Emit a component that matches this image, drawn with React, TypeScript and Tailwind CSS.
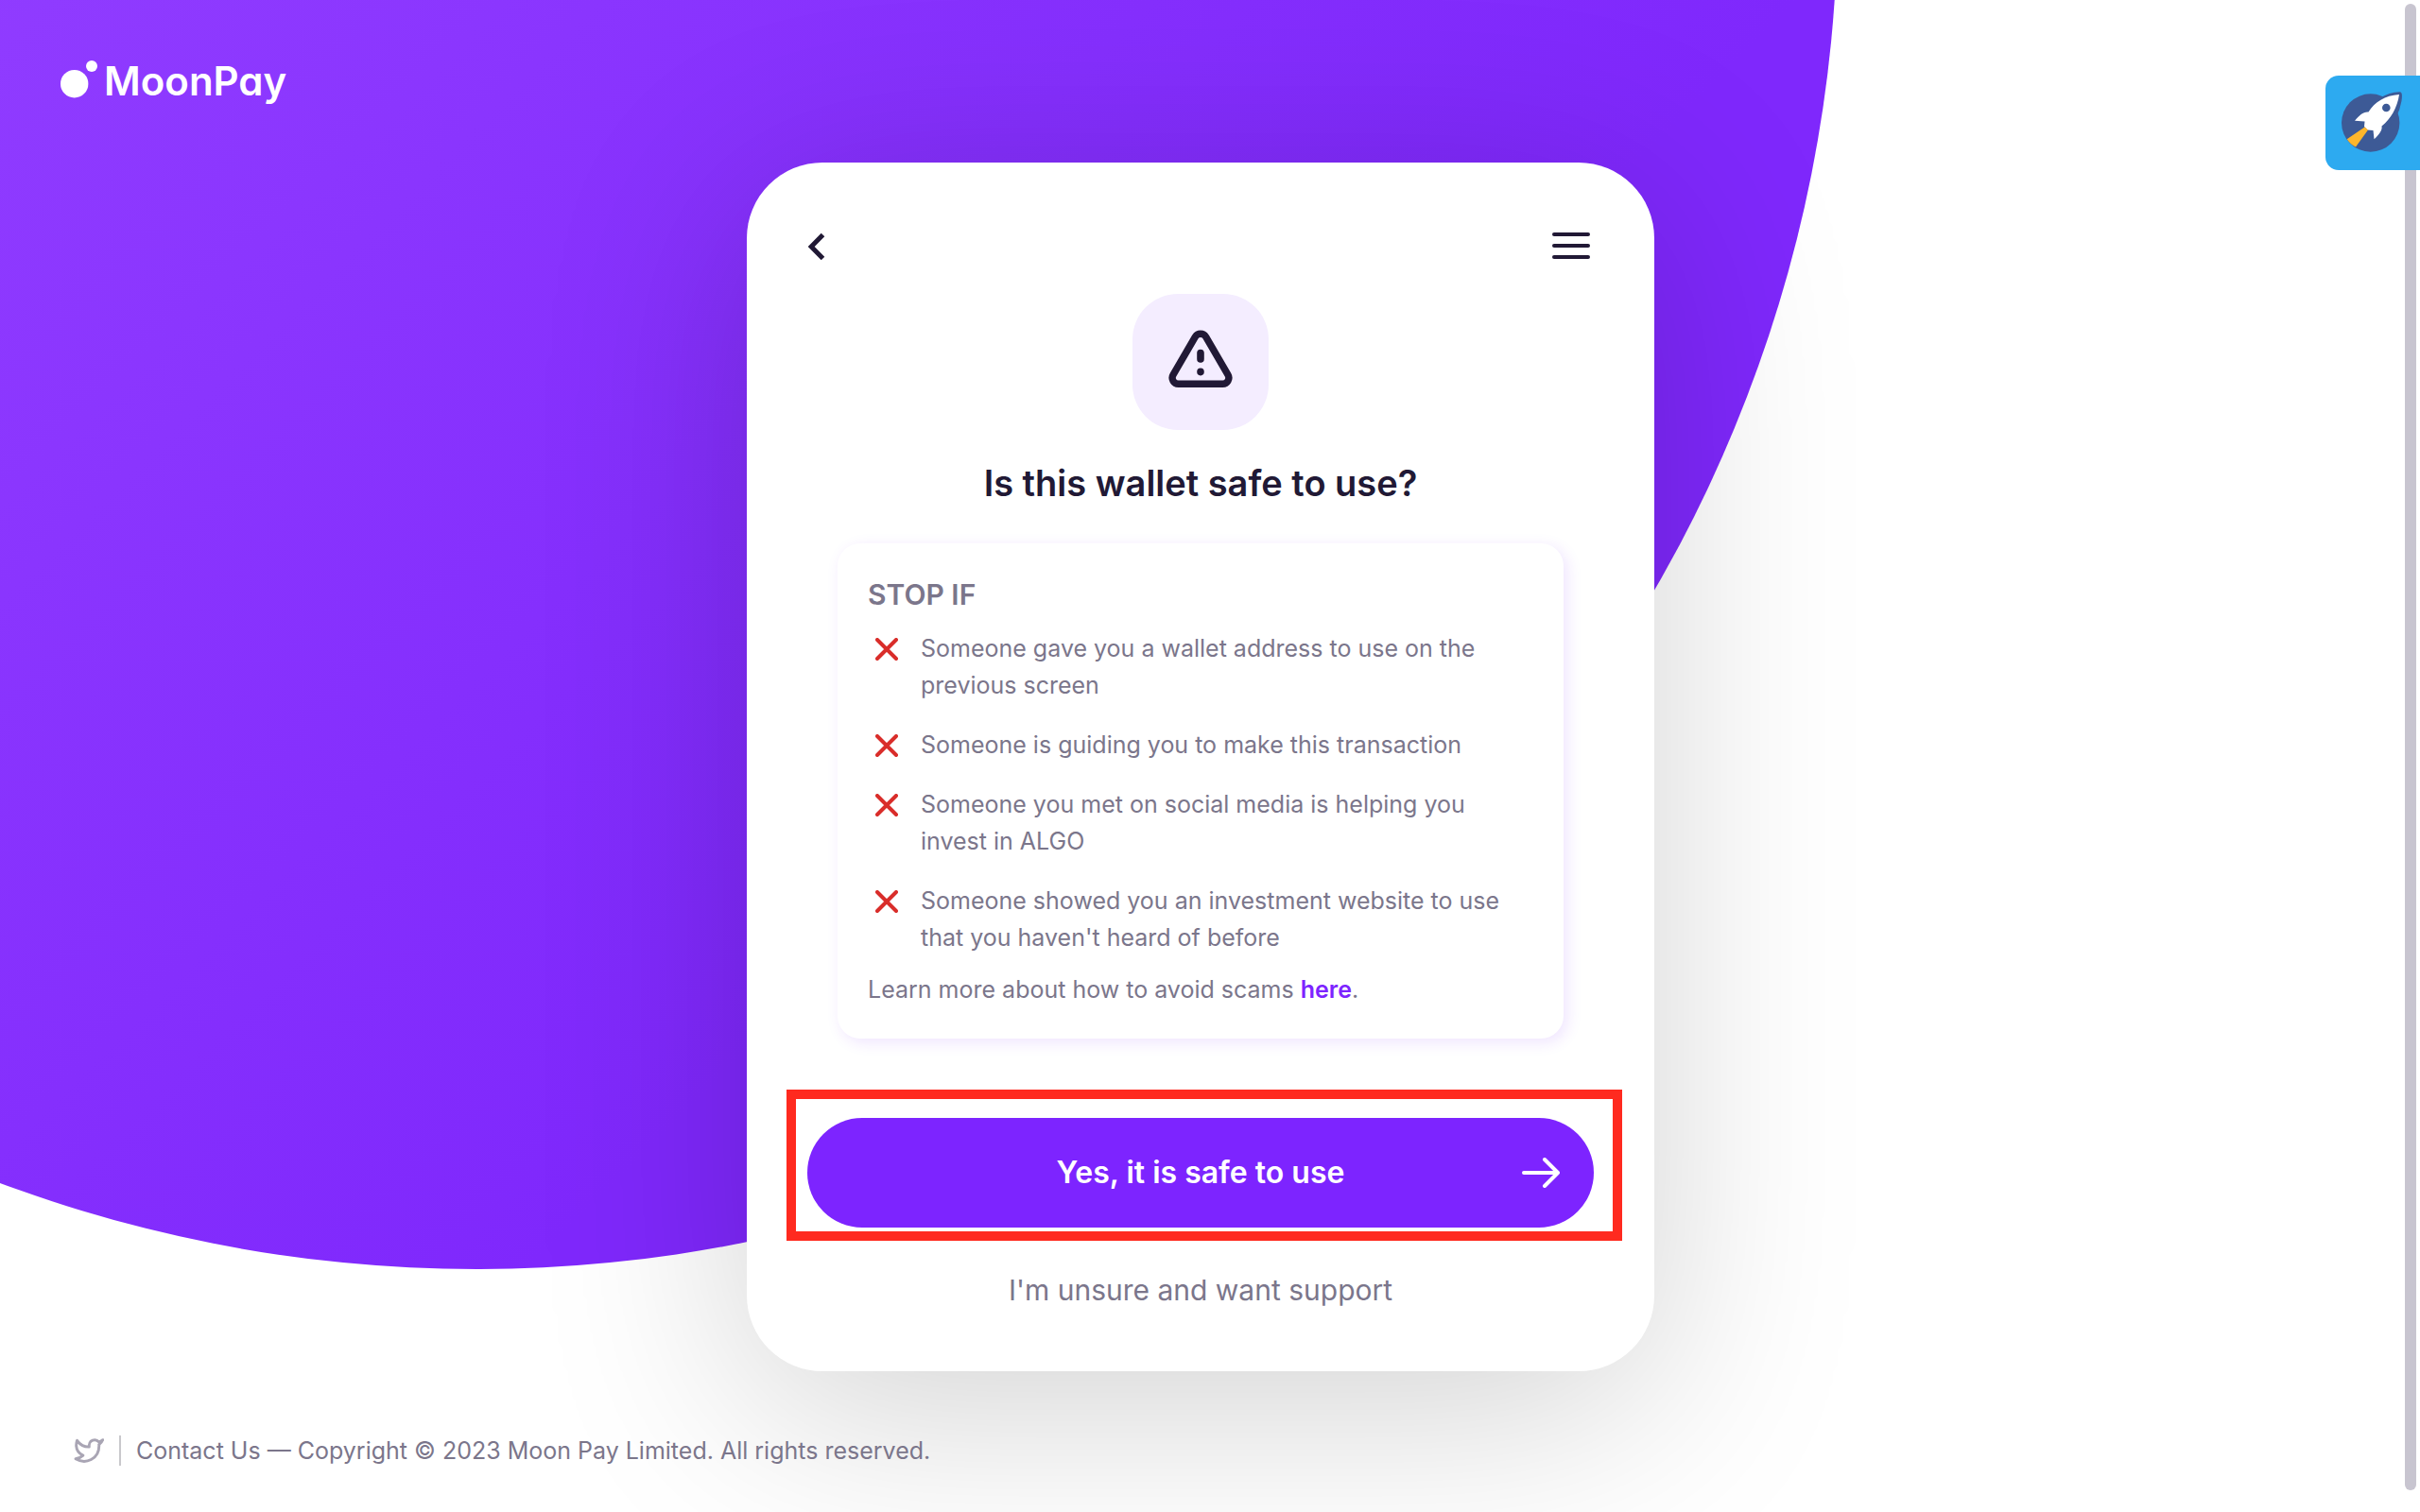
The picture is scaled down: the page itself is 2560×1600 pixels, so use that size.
import React from "react";

const warnings = [
  "Someone gave you a wallet address to use on the previous screen",
  "Someone is guiding you to make this transaction",
  "Someone you met on social media is helping you invest in ALGO",
  "Someone showed you an investment website to use that you haven't heard of before",
];

function Logo() {
  return (
    <a href="#" aria-label="MoonPay" className="flex items-center gap-1.5 text-white">
      <svg viewBox="0 0 40 40" className="mb-1 size-10" fill="currentColor" aria-hidden="true">
        <circle cx="14.7" cy="24.7" r="14.7" />
        <circle cx="33" cy="6" r="6" />
      </svg>
      <span className="text-[42px] leading-[52px] font-semibold [font-feature-settings:'cv11']">MoonPay</span>
    </a>
  );
}

function CrossIcon() {
  return (
    <svg viewBox="0 0 24 24" className="mt-2 size-6 shrink-0" fill="none" stroke="#d92d2a" strokeWidth="4" strokeLinecap="round" aria-hidden="true">
      <path d="M2 2 22 22M22 2 2 22" />
    </svg>
  );
}

function WarningIcon() {
  return (
    <svg viewBox="0 0 68 62" className="h-[62px] w-[68px]" fill="none" stroke="#211935" strokeLinecap="round" strokeLinejoin="round" aria-hidden="true">
      <path strokeWidth="7.4" d="M28.4 7.4a6.6 6.6 0 0 1 11.2 0L63 47.6a6.4 6.4 0 0 1-5.6 9.6H10.6A6.4 6.4 0 0 1 5 47.6Z" />
      <path strokeWidth="7.6" d="M34 24.6v6.4M34 44.2v.4" />
    </svg>
  );
}

function RocketIcon() {
  return (
    <svg viewBox="0 0 100 100" className="size-[100px]" aria-hidden="true">
      <circle cx="47.7" cy="50" r="30.7" fill="#3d5a96" />
      <path d="M78.5 19.2c1 0 .8 12-5.500 23.500S60 56 58 58L43 52 44 40C52 28 64 20 78.500 19.200Z" fill="#3d5a96" stroke="#3d5a96" strokeWidth="4" strokeLinejoin="round" />
      <path d="M78 20C63 21 52 28 45.500 38.500 40 38 36 42 31 47.800L41.500 48.500 41 54 44.500 57.500 50.500 58 51.500 67.300C56 63 60.500 58 59.500 53.500 69 46 76 34 78 20Z" fill="#fff" />
      <circle cx="64.300" cy="34" r="4.300" fill="#3d5a96" />
      <path d="M41.500 54.500 45 57.500 32 75.500Q26.500 73 22.700 67.200Z" fill="#fdb62b" />
    </svg>
  );
}

export default function App() {
  return (
    <div className="relative isolate flex min-h-screen flex-col overflow-hidden bg-white pr-5 font-['Inter',sans-serif]">
      <div
        aria-hidden="true"
        className="absolute -top-[1537px] -left-[936px] -z-10 size-[2880px] rounded-full bg-[linear-gradient(135deg,#903cff_42%,#7f28fc_76%)]"
      />

      <header className="flex h-43 items-start px-16 pt-15">
        <Logo />
      </header>

      <main className="mx-auto w-full max-w-[960px] rounded-[80px] bg-white px-16 pb-15 shadow-[0_40px_220px_0_rgba(0,0,0,0.18)]">
        <div className="flex h-[139px] items-center justify-between pt-9">
          <button type="button" aria-label="Back" className="flex h-10 w-10 items-center">
            <svg viewBox="0 0 20 30" className="h-[30px] w-5" fill="none" stroke="#211935" strokeWidth="5" aria-hidden="true">
              <path d="M16.500 3.500 4.200 16l12.300 12.500" />
            </svg>
          </button>
          <button type="button" aria-label="Menu" className="mr-1 flex h-10 w-10 flex-col justify-center gap-2">
            <span className="h-1 w-full rounded-full bg-[#211935]" />
            <span className="h-1 w-full rounded-full bg-[#211935]" />
            <span className="h-1 w-full rounded-full bg-[#211935]" />
          </button>
        </div>

        <div className="mx-auto flex size-36 items-center justify-center rounded-[48px] bg-[#f4edff] pb-1.5">
          <WarningIcon />
        </div>

        <h1 className="mt-8 text-center text-[38px] leading-[48px] font-semibold text-[#211935]">Is this wallet safe to use?</h1>

        <section className="mx-8 mt-10 rounded-3xl bg-white px-8 pt-[30px] pb-8 text-[#7b768b] shadow-[4px_4px_16px_0_rgba(125,36,255,0.12)]">
          <h2 className="text-[30px] leading-[48px] font-semibold">STOP IF</h2>
          <ul className="mt-3.5 flex flex-col gap-6 text-[25px] leading-[39px]">
            {warnings.map((text) => (
              <li key={text} className="flex gap-6 pl-2">
                <CrossIcon />
                <span>{text}</span>
              </li>
            ))}
          </ul>
          <p className="mt-4 text-[25px] leading-[39px]">
            Learn more about how to avoid scams{" "}
            <a href="#" className="font-semibold text-[#7d24ff]">here</a>.
          </p>
        </section>

        <div className="-mr-[30px] -ml-[22px] mt-[54px] border-10 border-[#ff2a1f] pt-5 pr-5 pb-1 pl-3">
          <button type="button" className="relative flex h-[116px] w-full items-center justify-center rounded-full bg-[#7d24ff] text-[32px] font-semibold text-white">
            Yes, it is safe to use
            <svg viewBox="0 0 40 32" className="absolute right-9 h-8 w-10" fill="none" stroke="currentColor" strokeWidth="4" strokeLinecap="round" strokeLinejoin="round" aria-hidden="true">
              <path d="M2 16h36M24 2l14 14-14 14" />
            </svg>
          </button>
        </div>

        <button type="button" className="mx-auto mt-7 mb-0.5 block text-[30px] leading-[48px] text-[#7b768b]">
          I'm unsure and want support
        </button>
      </main>

      <footer className="flex items-center px-[78px] pt-16 text-[25px] leading-[40px] text-[#7b768b]">
        <a href="#" aria-label="Twitter" className="text-[#a9a5b4]">
          <svg viewBox="0 0 24 24" className="size-8" fill="none" stroke="currentColor" strokeWidth="2.200" strokeLinecap="round" strokeLinejoin="round" aria-hidden="true">
            <path d="M23 3.500c-.9.700-2 1.300-3.100 1.600a4.400 4.400 0 0 0-7.700 3v1C8.300 9.200 4.900 7.200 2.700 4c0 0-3.300 8 4.700 11.800A11 11 0 0 1 1.500 18.600c8 4.600 18.600.4 18.600-10.500 0-.3 0-.5-.1-.8A8 8 0 0 0 23 3.500z" />
          </svg>
        </a>
        <span className="mx-4 h-8 w-0.5 bg-[#c9c8cc]" />
        <p>
          <a href="#">Contact Us</a> — Copyright © 2023 Moon Pay Limited. All rights reserved.
        </p>
      </footer>

      <div aria-hidden="true" className="absolute top-1 right-1 bottom-[23px] w-3 rounded-full bg-[#c8c5d0]" />
      <button type="button" aria-label="Launch" className="absolute top-20 right-0 rounded-l-[14px] bg-[#2daaf0]">
        <RocketIcon />
      </button>
    </div>
  );
}
